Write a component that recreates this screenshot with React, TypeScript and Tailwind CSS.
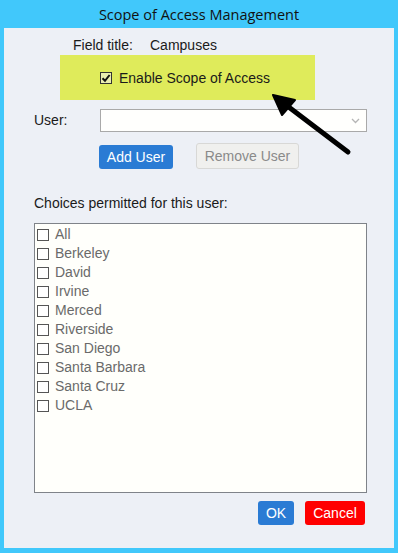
import React, { useState } from "react";

const campuses = [
  "All",
  "Berkeley",
  "David",
  "Irvine",
  "Merced",
  "Riverside",
  "San Diego",
  "Santa Barbara",
  "Santa Cruz",
  "UCLA",
];

const App = () => {
  const [enabled, setEnabled] = useState(true);
  const [checked, setChecked] = useState<string[]>([]);

  const toggle = (name: string) =>
    setChecked((c) => (c.includes(name) ? c.filter((x) => x !== name) : [...c, name]));

  return (
    <div
      className="w-[398px] h-[553px] bg-[#41c8fb] flex flex-col"
      style={{ fontFamily: '"Liberation Sans", Arial, sans-serif' }}
    >
      {/* Title bar */}
      <div
        className="h-[28px] flex items-center justify-center text-[14.5px] text-[#111] pt-[1px]"
        style={{ fontFamily: '"Open Sans", "Noto Sans", sans-serif' }}
      >
        Scope of Access Management
      </div>

      {/* Dialog body */}
      <div className="relative mx-[4px] h-[520px] bg-[#edf0f6] text-[14px] text-[#1a1a1a]">
        <div className="flex pl-[69px] pt-[9px] h-[27px] leading-[16px]">
          <span className="w-[77px]">Field title:</span>
          <span>Campuses</span>
        </div>

        {/* Highlighted checkbox */}
        <div className="ml-[56px] w-[255px] h-[45px] bg-[#dfeb5b] flex items-center pl-[40px]">
          <label className="flex items-center gap-[7px] text-[14px] cursor-pointer">
            <span
              onClick={() => setEnabled(!enabled)}
              className="w-[12px] h-[12px] border border-[#333] bg-[#e9edb0] flex items-center justify-center"
            >
              {enabled && (
                <svg width="10" height="10" viewBox="0 0 10 10">
                  <path d="M1.5 5.2 L4 7.8 L8.6 2" stroke="#111" strokeWidth="2" fill="none" />
                </svg>
              )}
            </span>
            <span className="leading-[16px]">Enable Scope of Access</span>
          </label>
        </div>

        {/* User select */}
        <div className="flex items-center mt-[9px] pl-[30px]">
          <span className="w-[66px]">User:</span>
          <div className="w-[267px] h-[23px] border border-[#a9a9a9] bg-[#fffffd] flex items-center justify-end pr-[6px]">
            <svg width="9" height="6" viewBox="0 0 9 6">
              <path d="M1 1 L4.5 4.5 L8 1" stroke="#b5b5b5" strokeWidth="1.3" fill="none" />
            </svg>
          </div>
        </div>

        {/* Add / Remove */}
        <div className="flex items-center pl-[95px] mt-[11px] h-[26px]">
          <button className="w-[74px] h-[24px] mt-[2px] rounded-[3px] bg-[#2a7bd4] text-white text-[14px] leading-none">
            Add User
          </button>
          <button className="ml-[23px] w-[103px] h-[26px] rounded-[3px] bg-[#f0f0ee] border border-[#d8d8d6] text-[#8a8a8a] text-[14px] leading-none">
            Remove User
          </button>
        </div>

        <div className="pl-[30px] mt-[26px] h-[28px] leading-[16px]">Choices permitted for this user:</div>

        {/* Choices list */}
        <div className="ml-[30px] w-[333px] h-[270px] border border-[#7f8389] bg-[#fffffb] pt-[1px] pl-[2px]">
          {campuses.map((name) => (
            <label
              key={name}
              className="flex items-center h-[19px] gap-[6px] text-[14px] text-[#6a6a6a] cursor-pointer"
            >
              <span
                onClick={() => toggle(name)}
                className="w-[12px] h-[12px] border border-[#555] bg-white flex items-center justify-center"
              >
                {checked.includes(name) && (
                  <svg width="9" height="9" viewBox="0 0 10 10">
                    <path d="M1.5 5.2 L4 7.8 L8.6 2" stroke="#111" strokeWidth="2" fill="none" />
                  </svg>
                )}
              </span>
              <span>{name}</span>
            </label>
          ))}
        </div>

        {/* OK / Cancel */}
        <div className="flex justify-end gap-[11px] pr-[29px] mt-[8px]">
          <button className="w-[36px] h-[24px] rounded-[3px] bg-[#2a7bd4] text-white text-[14px] leading-none">
            OK
          </button>
          <button className="w-[60px] h-[24px] rounded-[3px] bg-[#ff0000] text-white text-[14px] leading-none">
            Cancel
          </button>
        </div>

        {/* Annotation arrow */}
        <svg className="absolute left-[264px] top-[60px] pointer-events-none" width="90" height="72" viewBox="0 0 90 72">
          <path d="M80 64 L22 20" stroke="#000" strokeWidth="5" strokeLinecap="round" />
          <path d="M5 7 L27 12 L14 27 Z" fill="#000" stroke="#000" strokeWidth="2" strokeLinejoin="round" />
        </svg>
      </div>
    </div>
  );
};

export default App;
